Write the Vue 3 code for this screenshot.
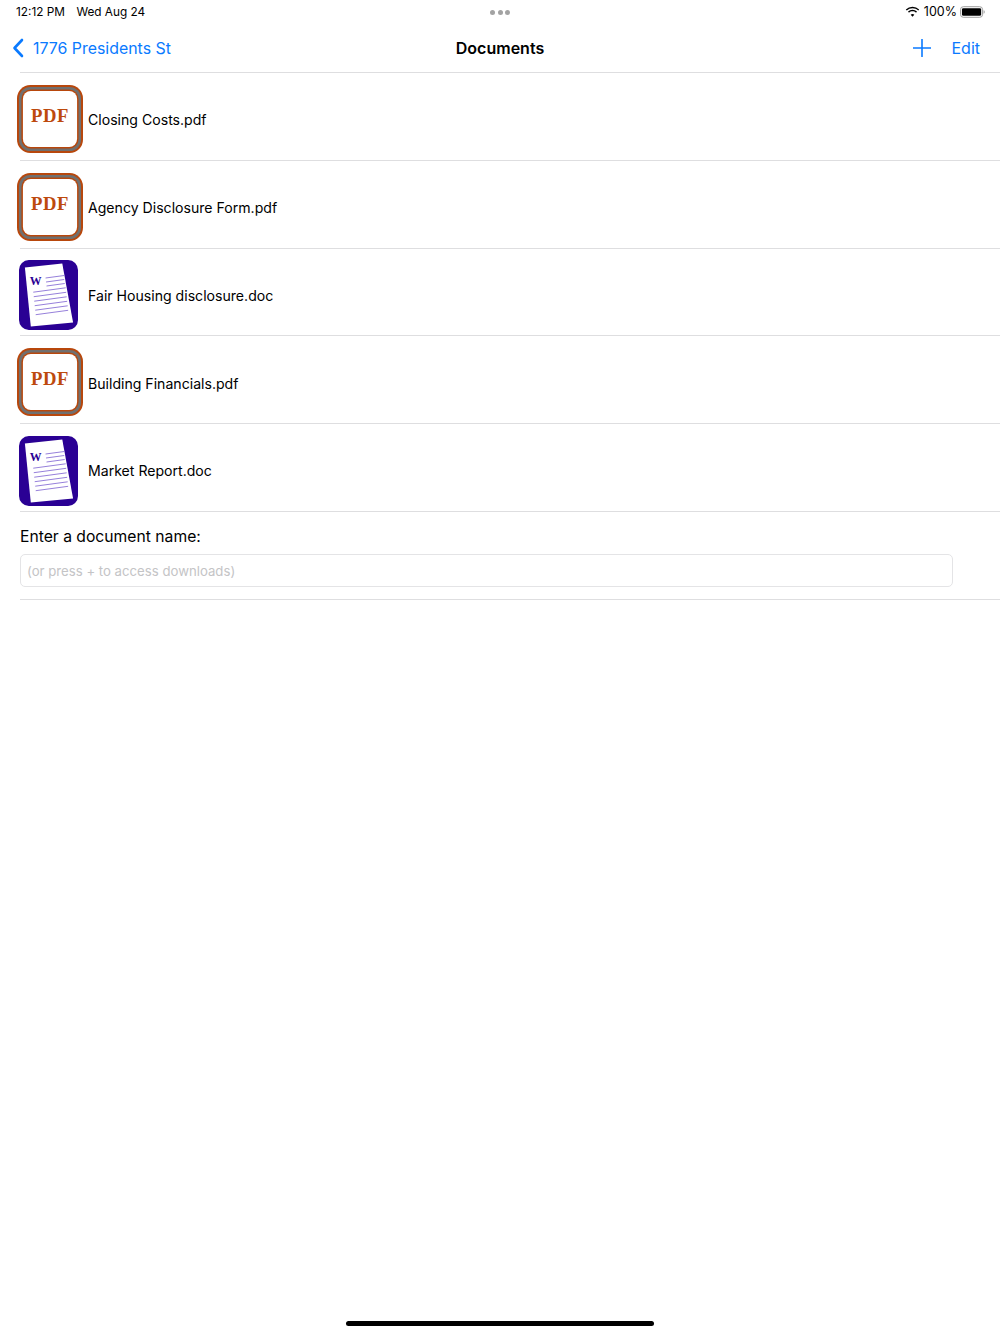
<script setup>
const docs = [
  { name: "Closing Costs.pdf", type: "pdf" },
  { name: "Agency Disclosure Form.pdf", type: "pdf" },
  { name: "Fair Housing disclosure.doc", type: "doc" },
  { name: "Building Financials.pdf", type: "pdf" },
  { name: "Market Report.doc", type: "doc" },
];
// text lines on the little word page
const headLines = [
  [27, 18, 46, 15.5],
  [27.5, 22, 46, 19.5],
  [28, 26, 46.5, 23.5],
];
const bodyLines = [
  [14.5, 32.2, 47.5, 27.8],
  [15, 36.7, 48, 32.3],
  [15.5, 41.2, 48.5, 36.8],
  [16, 45.7, 49, 41.3],
  [16.5, 50.2, 49.5, 45.8],
  [17, 54.7, 50, 50.3],
];
</script>

<template>
  <div class="page">
    <div class="status">
      <div class="status-left">
        <span>12:12 PM</span>
        <span>Wed Aug 24</span>
      </div>
      <div class="dots"><i></i><i></i><i></i></div>
      <div class="status-right">
        <svg class="wifi" width="15" height="11" viewBox="0 0 15 11">
          <path d="M7.5 2.2c2.2 0 4.2.9 5.7 2.3l1-1.1A9.7 9.7 0 0 0 7.5.7 9.7 9.7 0 0 0 .8 3.4l1 1.1a8.2 8.2 0 0 1 5.7-2.3z" fill="#000" />
          <path d="M7.5 5.3c1.3 0 2.5.5 3.5 1.4l1-1.1a6.6 6.6 0 0 0-9 0l1 1.1c1-.9 2.2-1.4 3.5-1.4z" fill="#000" />
          <path d="M7.5 8c-.7 0-1.3.3-1.8.7l1.8 2 1.8-2C8.8 8.3 8.2 8 7.5 8z" fill="#000" />
        </svg>
        <span class="pct">100%</span>
        <svg width="25" height="12" viewBox="0 0 26 12">
          <rect x="0.5" y="0.5" width="23" height="11" rx="3" fill="none" stroke="#9a9a9a" />
          <rect x="2" y="2" width="20" height="8" rx="1.5" fill="#000" />
          <path d="M24.6 4.2c.7.2 1.1.9 1.1 1.8s-.4 1.6-1.1 1.8z" fill="#9a9a9a" />
        </svg>
      </div>
    </div>

    <header class="nav">
      <div class="back">
        <svg width="12" height="20" viewBox="0 0 12 20">
          <path d="M10 2 2.5 10 10 18" fill="none" stroke="#0a7aff" stroke-width="2.6" stroke-linecap="round" stroke-linejoin="round" />
        </svg>
        <span>1776 Presidents St</span>
      </div>
      <div class="title">Documents</div>
      <div class="actions">
        <svg width="18" height="18" viewBox="0 0 18 18">
          <path d="M9 .5v17M.5 9h17" stroke="#0a7aff" stroke-width="1.6" stroke-linecap="round" />
        </svg>
        <span>Edit</span>
      </div>
    </header>

    <ul class="list">
      <li v-for="doc in docs" :key="doc.name" class="row">
        <div class="icon-slot" :class="doc.type">
          <svg v-if="doc.type === 'pdf'" width="66" height="68" viewBox="0 0 67 68" preserveAspectRatio="none">
            <rect x="0" y="0" width="67" height="68" rx="13.5" fill="#b8470c" />
            <rect x="2" y="2" width="63" height="64" rx="11.5" fill="#707070" />
            <rect x="4.5" y="4.5" width="58" height="59" rx="9.5" fill="#b8470c" />
            <rect x="6" y="6" width="55" height="56" rx="8" fill="#fff" />
            <text x="33.5" y="37" class="pdf-text" text-anchor="middle">PDF</text>
          </svg>
          <svg v-else width="59" height="70" viewBox="0 0 60 70" preserveAspectRatio="none">
            <rect x="0" y="0" width="60" height="70" rx="10" fill="#2a0094" />
            <path d="M6 7.5 44 3.5 55 62.5 12 66.5z" fill="#fff" />
            <text x="11" y="25.5" class="w-text">W</text>
            <line v-for="(l, i) in headLines" :key="'h' + i" :x1="l[0]" :y1="l[1]" :x2="l[2]" :y2="l[3]" stroke="#7a5fd0" stroke-width="0.8" />
            <line v-for="(l, i) in bodyLines" :key="'b' + i" :x1="l[0]" :y1="l[1]" :x2="l[2]" :y2="l[3]" stroke="#7a5fd0" stroke-width="0.8" />
          </svg>
        </div>
        <span class="doc-name">{{ doc.name }}</span>
      </li>
    </ul>

    <section class="form">
      <label class="form-label">Enter a document name:</label>
      <div class="field">(or press + to access downloads)</div>
    </section>

    <div class="home-bar"></div>
  </div>
</template>

<style scoped>
.page {
  position: relative;
  width: 1000px;
  height: 1334px;
  background: #fff;
  color: #000;
  font-family: Inter, "Liberation Sans", sans-serif;
  overflow: hidden;
}

.status {
  display: flex;
  justify-content: space-between;
  align-items: center;
  height: 24px;
  box-sizing: border-box;
  padding: 0 15px 1px 16px;
  font-size: 11.8px;
  position: relative;
}

.status-left {
  display: flex;
  gap: 11.5px;
}

.status-right {
  display: flex;
  align-items: center;
  gap: 3px;
}

.wifi {
  margin-right: 1px;
}

.pct {
  font-size: 12.5px;
}

.dots {
  position: absolute;
  left: 490px;
  top: 10px;
  display: flex;
  gap: 2.5px;
}

.dots i {
  width: 5px;
  height: 5px;
  border-radius: 50%;
  background: #a3a3a3;
}

.nav {
  display: grid;
  grid-template-columns: 1fr auto 1fr;
  align-items: center;
  height: 48px;
  margin-left: 20px;
  padding-right: 20px;
  border-bottom: 1px solid #dedee0;
}

.back {
  display: flex;
  align-items: center;
  gap: 9px;
  margin-left: -8px;
  color: #0a7aff;
  font-size: 15.9px;
}

.title {
  font-size: 16px;
  font-weight: 600;
}

.actions {
  display: flex;
  justify-content: flex-end;
  align-items: center;
  gap: 20px;
  color: #0a7aff;
  font-size: 16px;
}

.list {
  list-style: none;
  margin: 0;
  padding: 0;
}

.row {
  display: flex;
  align-items: center;
  box-sizing: border-box;
  height: 87.8px;
  padding-top: 6.5px;
  margin-left: 20px;
  border-bottom: 1px solid #dedee0;
}

.icon-slot {
  display: flex;
  justify-content: center;
  width: 60px;
  flex: none;
}

.icon-slot.pdf {
  margin-top: -1.5px;
}

.icon-slot.doc {
  margin-left: -1.5px;
  margin-right: 1.5px;
  margin-top: 0.5px;
}

.icon-slot svg {
  flex: none;
  display: block;
}

.pdf-text {
  font-family: "Liberation Serif", serif;
  font-size: 19px;
  font-weight: 700;
  letter-spacing: 0.5px;
  fill: #bd4a0d;
}

.w-text {
  font-family: "Liberation Serif", serif;
  font-size: 12px;
  font-weight: 700;
  fill: #2a0094;
}

.doc-name {
  margin-left: 8px;
  font-size: 14.1px;
}

.form {
  margin-left: 20px;
  padding: 15px 47px 12px 0;
  border-bottom: 1px solid #dedee0;
}

.form-label {
  display: block;
  font-size: 15.7px;
  line-height: 20px;
}

.field {
  margin-top: 7px;
  height: 33px;
  box-sizing: border-box;
  border: 1px solid #e4e4e6;
  border-radius: 5px;
  padding: 0 6px;
  font-size: 13.2px;
  line-height: 33px;
  color: #c4c4c6;
}

.home-bar {
  position: absolute;
  left: 346px;
  bottom: 8px;
  width: 308px;
  height: 5px;
  border-radius: 3px;
  background: #000;
}
</style>
